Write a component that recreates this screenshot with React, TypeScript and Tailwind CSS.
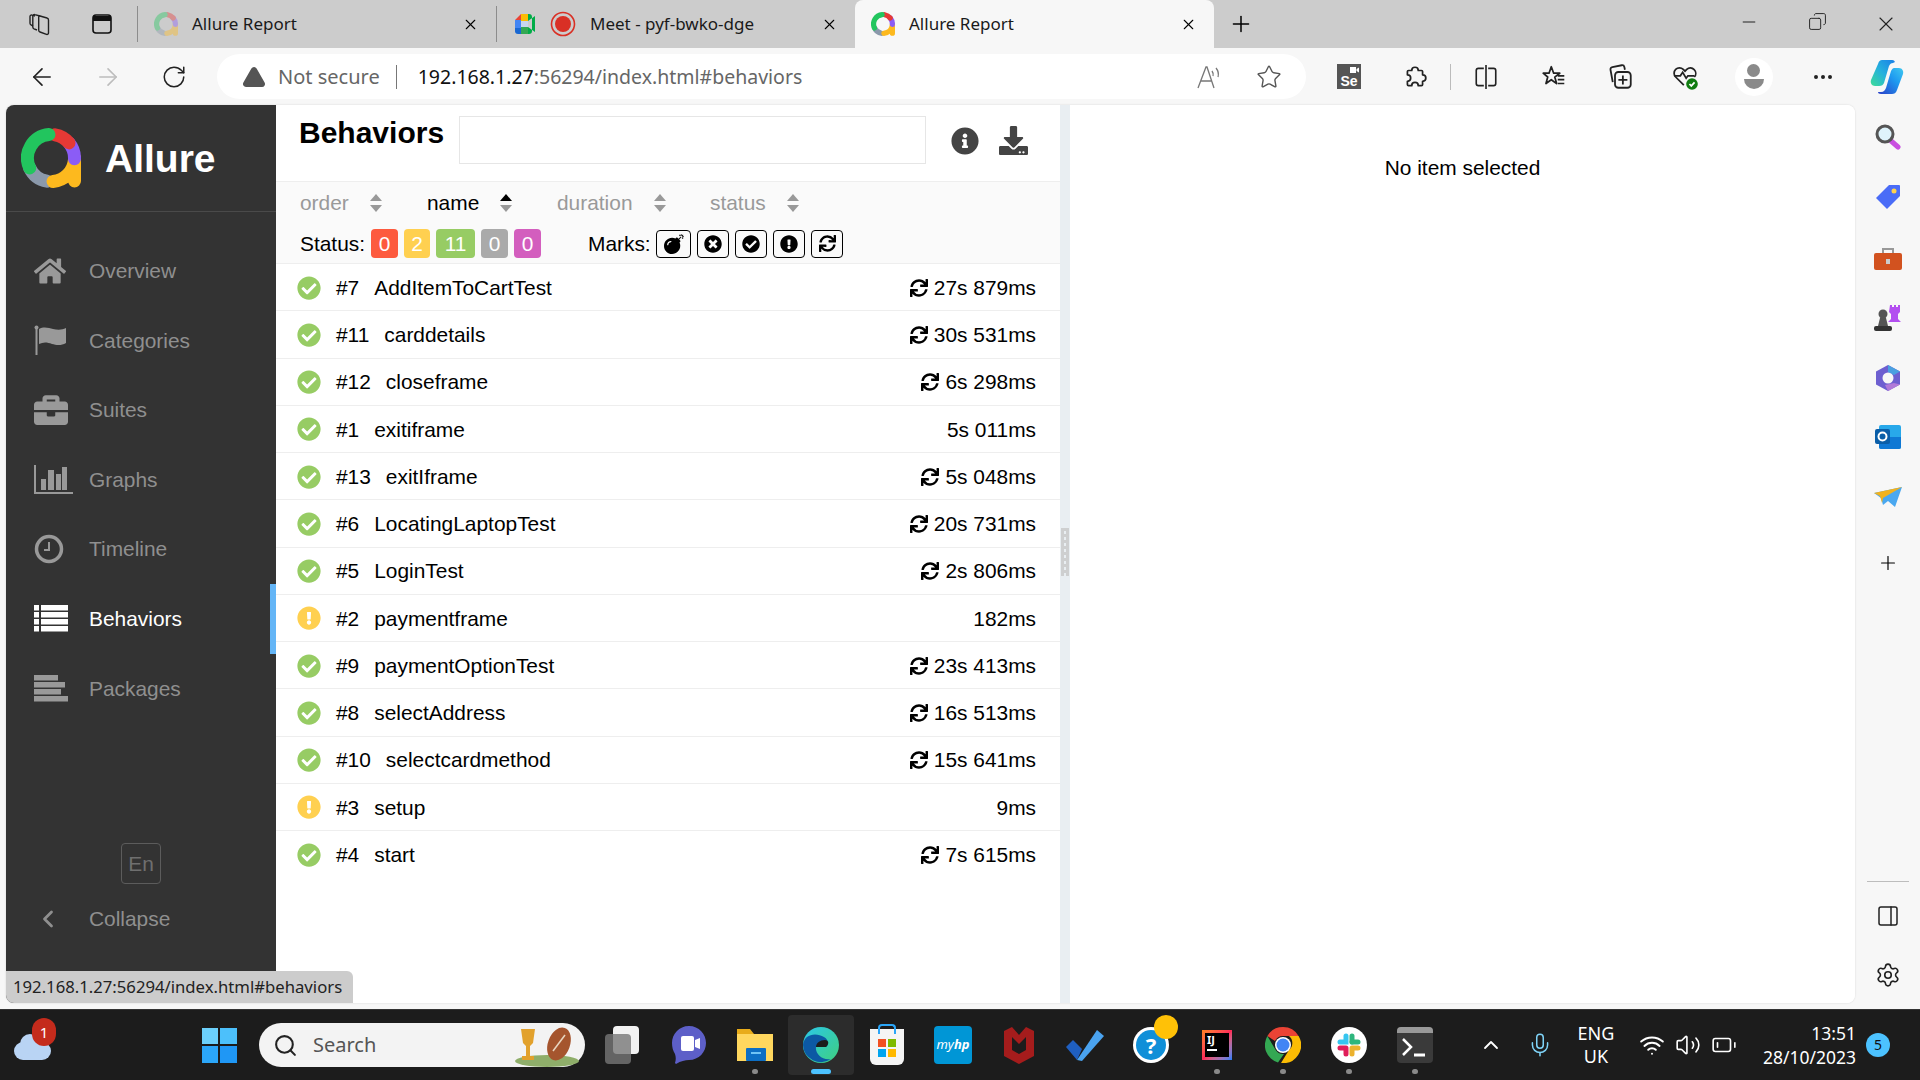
import React from 'react';
import {
  ArrowLeft, ArrowRight, RotateCw, Plus, X, Minus, Star, Copy, MoreHorizontal,
  Settings, PanelRight, ChevronUp, Mic, Wifi, Volume2, BatteryLow, Search, TriangleAlert, ChevronLeft,
} from 'lucide-react';
import {
  FaHome, FaBriefcase, FaCheckCircle, FaExclamationCircle, FaSync, FaInfoCircle, FaDownload, FaBomb, FaTimesCircle,
} from 'react-icons/fa';

const sans = "font-['Liberation_Sans',Arial,sans-serif]";
const ui = "font-['Noto_Sans',sans-serif]";

function polar(r: number, deg: number) {
  const a = ((deg - 90) * Math.PI) / 180;
  return `${(30 + r * Math.cos(a)).toFixed(2)} ${(30 + r * Math.sin(a)).toFixed(2)}`;
}
function arc(a0: number, a1: number, r = 23.5) {
  return `M${polar(r, a0)} A${r} ${r} 0 ${a1 - a0 > 180 ? 1 : 0} 1 ${polar(r, a1)}`;
}

function AllureLogo({ size, faded }: { size: number; faded?: boolean }) {
  const segs = [
    { d: arc(190, 245), c: '#8b99ab' },
    { d: `${arc(95, 175)} M53.5 30 V53`, c: '#fdb91e' },
    { d: arc(50, 92), c: '#8b5cf6' },
    { d: arc(10, 50), c: '#e53935' },
    { d: arc(245, 355), c: '#22c55e' },
  ];
  return (
    <svg width={size} height={size} viewBox="0 0 60 60" fill="none" className={faded ? 'opacity-40' : ''}>
      {segs.map((s, i) => (
        <path key={i} d={s.d} stroke={s.c} strokeWidth="13" strokeLinecap="round" />
      ))}
    </svg>
  );
}

function Tab({ children, title, active }: { children: React.ReactNode; title: string; active?: boolean }) {
  return (
    <div className={`w-[359px] flex items-center pl-4 pr-[17px] relative ${active ? 'h-12 bg-[#f7f7f7] rounded-t-lg' : 'border-l border-[#8c8c8c] h-[36px]'}`}>
      {children}
      <span className={`ml-[14px] text-[17px] text-[#1a1a1a] flex-1 ${ui}`}>{title}</span>
      <X size={17} strokeWidth={1.5} className="text-black" />
    </div>
  );
}

function TabBar() {
  return (
    <div className="h-12 bg-[#cccccc] flex items-center">
      <div className="w-[78px] flex justify-center ml-0">
        <svg width="26" height="26" viewBox="0 0 26 26" fill="none" stroke="#222" strokeWidth="1.4">
          <path d="M14 5l7 2a2 2 0 0 1 1.500 2V22a1.500 1.500 0 0 1-2 1.400l-6.500-2.400a2 2 0 0 1-1.300-1.800V6.500A1.200 1.200 0 0 1 14 5z" />
          <path d="M11 19l-3-1.200a2 2 0 0 1-1.200-1.800V5a1.500 1.500 0 0 1 2-1.400L14 5" />
          <path d="M7 15l-2-1a2 2 0 0 1-1-1.700V5.500a1.500 1.500 0 0 1 2-1.400L9 5" />
        </svg>
      </div>
      <div className="w-[48px] flex justify-center">
        <svg width="24" height="24" viewBox="0 0 24 24" fill="none" stroke="#111" strokeWidth="1.6">
          <rect x="3" y="3" width="18" height="18" rx="3" />
          <path d="M3 6.500h18" strokeWidth="5" />
        </svg>
      </div>
      <div className="w-[11px]" />
      <Tab title="Allure Report">
        <AllureLogo size={24} faded />
      </Tab>
      <Tab title="Meet - pyf-bwko-dge">
        <svg width="24" height="24" viewBox="0 0 24 24">
          <path d="M2 8l6-6h7v7H8v6H2z" fill="#ea4335" />
          <path d="M2 8h6v8H2z" fill="#4285f4" />
          <path d="M8 9h7v6H8z" fill="#c7d6ee" />
          <path d="M2 16h6v6H5a3 3 0 0 1-3-3z" fill="#1967d2" />
          <path d="M8 15h7v7H8z" fill="#34a853" />
          <path d="M15 2v7l7-5v16l-7-5v7h1a3 3 0 0 0 3-3V5a3 3 0 0 0-3-3z" fill="#00ac47" />
          <path d="M8 2h7v7H8z" fill="#fbbc04" />
        </svg>
        <svg width="26" height="26" viewBox="0 0 26 26" className="ml-[13px]">
          <circle cx="13" cy="13" r="11.500" fill="none" stroke="#d93025" strokeWidth="1.600" />
          <circle cx="13" cy="13" r="8" fill="#d93025" />
        </svg>
      </Tab>
      <Tab title="Allure Report" active>
        <AllureLogo size={24} />
      </Tab>
      <div className="flex-1 flex items-center pl-[14px]">
        <Plus size={26} strokeWidth={1.4} className="text-black" />
      </div>
      <div className="flex">
        <div className="w-[69px] flex justify-center"><Minus size={20} strokeWidth={1.2} className="text-[#222]" /></div>
        <div className="w-[69px] flex justify-center"><Copy size={19} strokeWidth={1.2} className="text-[#222] -scale-x-100" /></div>
        <div className="w-[68px] flex justify-center"><X size={24} strokeWidth={1.1} className="text-[#222]" /></div>
      </div>
    </div>
  );
}

function ToolSlot({ w, children }: { w: string; children: React.ReactNode }) {
  return <div className={`${w} flex justify-center items-center`}>{children}</div>;
}

function Toolbar() {
  return (
    <div className="h-[57px] bg-[#f7f7f7] flex items-center">
      <div className="w-[9px]" />
      <ToolSlot w="w-[66px]"><ArrowLeft size={28} strokeWidth={1.4} className="text-[#222]" /></ToolSlot>
      <ToolSlot w="w-[66px]"><ArrowRight size={28} strokeWidth={1.4} className="text-[#bdbdbd]" /></ToolSlot>
      <ToolSlot w="w-[66px]"><RotateCw size={26} strokeWidth={1.4} className="text-[#222]" /></ToolSlot>
      <div className="ml-[10px] w-[1089px] h-[45px] bg-white rounded-full flex items-center pl-[25px] pr-[6px]">
        <TriangleAlert size={24} strokeWidth={2} className="text-[#555] fill-[#555] stroke-[#555]" />
        <span className={`ml-[12px] text-[20px] text-[#666] ${ui}`}>Not secure</span>
        <div className="ml-4 w-px h-6 bg-[#777]" />
        <span className={`ml-[21px] text-[19.5px] text-[#111] flex-1 ${ui}`}>
          192.168.1.27<span className="text-[#666]">:56294/index.html#behaviors</span>
        </span>
        <svg width="28" height="28" viewBox="0 0 28 28" fill="none" stroke="#777" strokeWidth="1.300" className="mr-[32px]">
          <path d="M2 25L10 4h1l7 21M5 18h11" />
          <path d="M16 8a6 6 0 0 1 1 5M20 5a10 10 0 0 1 2 9" />
        </svg>
        <Star size={26} strokeWidth={1.3} className="text-[#555] mr-[18px]" />
      </div>
      <div className="w-[10px]" />
      <ToolSlot w="w-[66px]">
        <div className="relative w-[24px] h-[25px] bg-[#555] flex items-end justify-center">
          <svg width="9" height="6" viewBox="0 0 9 6" className="absolute right-[2px] top-[3px]">
            <path d="M0 0h6v6H0zM6.500 2L9 0.500v5L6.500 4z" fill="#fff" />
          </svg>
          <span className={`text-[14px] leading-[15px] font-bold text-white ${sans}`}>Se</span>
        </div>
      </ToolSlot>
      <ToolSlot w="w-[66px]">
        <svg width="26" height="26" viewBox="0 0 24 24" fill="none" stroke="#222" strokeWidth="1.600" strokeLinejoin="round">
          <path d="M9 6a3 3 0 1 1 6 0h3a1 1 0 0 1 1 1v3a3 3 0 1 1 0 6v3a1 1 0 0 1-1 1h-3a3 3 0 1 0-6 0H6a1 1 0 0 1-1-1v-3a3 3 0 1 0 0-6V7a1 1 0 0 1 1-1z" />
        </svg>
      </ToolSlot>
      <div className="w-px h-[26px] bg-[#bbb] ml-[2px]" />
      <ToolSlot w="w-[70px]">
        <svg width="26" height="26" viewBox="0 0 24 24" fill="none" stroke="#222" strokeWidth="1.500">
          <path d="M10 4H5a2 2 0 0 0-2 2v12a2 2 0 0 0 2 2h5M14 4h5a2 2 0 0 1 2 2v12a2 2 0 0 1-2 2h-5" />
          <path d="M12 1v22" />
        </svg>
      </ToolSlot>
      <ToolSlot w="w-[66px]">
        <svg width="26" height="26" viewBox="0 0 24 24" fill="none" stroke="#222" strokeWidth="1.600">
          <path d="M9.500 2.500l2.200 6h5.600l-4.600 3.600 1.700 6-4.900-3.600L4.600 18l1.600-6L2 8.500h5.400z" strokeLinejoin="round" />
          <path d="M15.500 11h6M15.500 14.500h6M15.500 18h6" />
        </svg>
      </ToolSlot>
      <ToolSlot w="w-[65px]">
        <svg width="27" height="27" viewBox="0 0 24 24" fill="none" stroke="#222" strokeWidth="1.600">
          <path d="M6 17l-2-11a2 2 0 0 1 1.600-2.400L14 2a2 2 0 0 1 2.300 1.500l.5 2.500" />
          <rect x="8" y="8" width="14" height="14" rx="3" />
          <path d="M15 11v8M11 15h8" />
        </svg>
      </ToolSlot>
      <ToolSlot w="w-[66px]">
        <svg width="28" height="28" viewBox="0 0 24 24" fill="none" stroke="#222" strokeWidth="1.500">
          <path d="M11 19L4 12a4.600 4.600 0 0 1 0-6.500 4.600 4.600 0 0 1 6.500 0L12 7l1.500-1.500a4.600 4.600 0 0 1 6.500 6.500" />
          <path d="M3 11h5l2-3 3 5 1.500-2H20" />
          <circle cx="18" cy="18" r="5" fill="#107c10" stroke="none" />
          <path d="M15.800 18l1.600 1.600 2.800-3" stroke="#fff" />
        </svg>
      </ToolSlot>
      <ToolSlot w="w-[71px]">
        <div className="w-[38px] h-[38px] rounded-full bg-white flex flex-col items-center justify-center">
          <div className="w-[13px] h-[13px] rounded-full bg-[#8a8a8a]" />
          <div className="w-[20px] h-[10px] rounded-b-full rounded-t-md bg-[#8a8a8a] mt-[2px]" />
        </div>
      </ToolSlot>
      <ToolSlot w="w-[68px]"><MoreHorizontal size={24} strokeWidth={2} className="text-[#222]" /></ToolSlot>
      <ToolSlot w="w-[60px]">
        <svg width="36" height="36" viewBox="0 0 36 36">
          <defs>
            <linearGradient id="cpa" x1="0" y1="1" x2="1" y2="0">
              <stop offset="0" stopColor="#3ddc97" />
              <stop offset="0.5" stopColor="#25b0dd" />
              <stop offset="1" stopColor="#1a7fe8" />
            </linearGradient>
            <linearGradient id="cpb" x1="0" y1="1" x2="1" y2="0">
              <stop offset="0" stopColor="#2b3fc8" />
              <stop offset="0.6" stopColor="#1e9af0" />
              <stop offset="1" stopColor="#3fc8f0" />
            </linearGradient>
          </defs>
          <path d="M13 1h10a3 3 0 0 1 3 2l-2 1c-2 0-3 1-4 3l-5 17c-1 2-2 3-5 3H6c-3 0-5-3-4-6L9 5c1-3 2-4 4-4z" fill="url(#cpa)" />
          <path d="M25 9h5c3 0 5 3 4 6l-6 16c-1 3-3 4-5 4H12c-2 0-3-1-3-2h3c3 0 4-2 5-4l5-17c1-2 2-3 3-3z" fill="url(#cpb)" />
        </svg>
      </ToolSlot>
    </div>
  );
}

function IconFlag() {
  return (
    <svg width="34" height="30" viewBox="0 0 34 30" fill="currentColor">
      <circle cx="2.500" cy="2.500" r="2" />
      <rect x="1.500" y="2" width="2" height="28" />
      <path d="M5 4c5-3 10-1 14 0 5 1 9 1 13-1v15c-5 3-10 2-14 1-5-2-9-2-13 0z" />
    </svg>
  );
}

function IconGraph() {
  return (
    <svg width="39" height="29" viewBox="0 0 39 29" fill="currentColor">
      <rect x="0" y="0" width="2" height="29" />
      <rect x="0" y="27" width="39" height="2" />
      <rect x="7" y="14" width="5" height="11" />
      <rect x="14" y="5" width="6" height="20" />
      <rect x="22" y="9" width="5" height="16" />
      <rect x="28" y="2" width="5" height="23" />
    </svg>
  );
}

function IconClock() {
  return (
    <svg width="30" height="30" viewBox="0 0 30 30" fill="none" stroke="currentColor">
      <circle cx="15" cy="15" r="12.500" strokeWidth="3.500" />
      <path d="M15 8v8H10" strokeWidth="2" />
    </svg>
  );
}

function IconThList() {
  return (
    <svg width="34" height="27" viewBox="0 0 34 27" fill="currentColor">
      {[0, 7, 14, 21].map((y) => (
        <g key={y}>
          <rect x="0" y={y} width="5" height="5.500" />
          <rect x="7" y={y} width="27" height="5.500" />
        </g>
      ))}
    </svg>
  );
}

function IconPackages() {
  return (
    <svg width="34" height="27" viewBox="0 0 34 27" fill="currentColor">
      <rect x="0" y="0" width="24" height="5.500" />
      <rect x="0" y="7" width="31" height="5.500" />
      <rect x="0" y="14" width="27" height="5.500" />
      <rect x="0" y="21" width="34" height="5.500" />
    </svg>
  );
}

const navItems = [
  { label: 'Overview', icon: <FaHome size={32} /> },
  { label: 'Categories', icon: <IconFlag /> },
  { label: 'Suites', icon: <FaBriefcase size={34} /> },
  { label: 'Graphs', icon: <IconGraph /> },
  { label: 'Timeline', icon: <IconClock /> },
  { label: 'Behaviors', icon: <IconThList />, active: true },
  { label: 'Packages', icon: <IconPackages /> },
];

function Sidebar() {
  return (
    <div className={`w-[270px] shrink-0 bg-[#333333] flex flex-col text-[20.9px] ${sans}`}>
      <div className="h-[107px] border-b border-[#4a4a4a] flex items-center pl-[15px]">
        <AllureLogo size={60} />
        <span className="ml-[24px] text-[39px] font-bold text-white leading-none">Allure</span>
      </div>
      <div className="pt-[24px]">
        {navItems.map((n) => (
          <div key={n.label} className={`h-[69.6px] flex items-center relative ${n.active ? 'text-white' : 'text-[#8f8f8f]'}`}>
            <div className={`w-[83px] pl-[28px] flex items-center ${n.active ? '' : 'text-[#999999]'}`}>{n.icon}</div>
            <span>{n.label}</span>
            {n.active && <div className="absolute right-0 top-0 bottom-0 w-[6px] bg-[#64b5f6]" />}
          </div>
        ))}
      </div>
      <div className="mt-auto pb-[49px]">
        <div className="flex justify-center">
          <div className="w-[40px] h-[41px] rounded border border-[#5c5c5c] flex items-center justify-center text-[#6f6f6f]">En</div>
        </div>
        <div className="h-[70px] flex items-center text-[#8f8f8f]">
          <div className="w-[83px] pl-[28px]"><ChevronLeft size={28} strokeWidth={2.4} /></div>
          <span>Collapse</span>
        </div>
      </div>
    </div>
  );
}

function SortIcon({ active }: { active?: boolean }) {
  return (
    <svg width="14" height="20" viewBox="0 0 14 20">
      <path d="M7 1l6 7H1z" fill={active ? '#000' : '#999'} />
      <path d="M7 19l6-7H1z" fill="#999" />
    </svg>
  );
}

const sorts = [
  { label: 'order', w: 'w-[127px]' },
  { label: 'name', w: 'w-[130px]', active: true },
  { label: 'duration', w: 'w-[153px]' },
  { label: 'status', w: 'w-[100px]' },
];

const statusBadges = [
  { v: '0', c: 'bg-[#fd5a3e] w-[27px]' },
  { v: '2', c: 'bg-[#ffd050] w-[26px]' },
  { v: '11', c: 'bg-[#97cc64] w-[39px]' },
  { v: '0', c: 'bg-[#aaaaaa] w-[27px]' },
  { v: '0', c: 'bg-[#d35ebe] w-[27px]' },
];

const rows = [
  { id: '#7', name: 'AddItemToCartTest', time: '27s 879ms', retry: true },
  { id: '#11', name: 'carddetails', time: '30s 531ms', retry: true },
  { id: '#12', name: 'closeframe', time: '6s 298ms', retry: true },
  { id: '#1', name: 'exitiframe', time: '5s 011ms' },
  { id: '#13', name: 'exitIframe', time: '5s 048ms', retry: true },
  { id: '#6', name: 'LocatingLaptopTest', time: '20s 731ms', retry: true },
  { id: '#5', name: 'LoginTest', time: '2s 806ms', retry: true },
  { id: '#2', name: 'paymentframe', time: '182ms', warn: true },
  { id: '#9', name: 'paymentOptionTest', time: '23s 413ms', retry: true },
  { id: '#8', name: 'selectAddress', time: '16s 513ms', retry: true },
  { id: '#10', name: 'selectcardmethod', time: '15s 641ms', retry: true },
  { id: '#3', name: 'setup', time: '9ms', warn: true },
  { id: '#4', name: 'start', time: '7s 615ms', retry: true },
];

function MarkBox({ w, children }: { w: string; children: React.ReactNode }) {
  return <div className={`${w} h-[28px] border border-black rounded-[4px] flex items-center justify-center`}>{children}</div>;
}

function ListPane() {
  return (
    <div className={`w-[784px] shrink-0 flex flex-col bg-white text-black text-[20.9px] ${sans}`}>
      <div className="h-[77px] border-b border-[#eeeeee] flex pl-[23px]">
        <h2 className="text-[30px] font-bold leading-none mt-[13px] w-[160px]">Behaviors</h2>
        <div className="w-[467px] h-[48px] mt-[11px] border border-[#e6e6e6]" />
        <FaInfoCircle size={28} className="text-[#444] ml-[25px] mt-[22px]" />
        <FaDownload size={29} className="text-[#444] ml-[20px] mt-[21px]" />
      </div>
      <div className="h-[82px] bg-[#fafafa] border-b border-[#eeeeee] pl-[24px]">
        <div className="flex h-[42px] items-center">
          {sorts.map((s) => (
            <div key={s.label} className={`${s.w} flex items-center gap-[20px] ${s.active ? 'text-black' : 'text-[#999999]'}`}>
              <span>{s.label}</span>
              <SortIcon active={s.active} />
            </div>
          ))}
        </div>
        <div className="flex items-center h-[39px]">
          <span className="w-[71px]">Status:</span>
          <div className="flex gap-[6px] w-[217px]">
            {statusBadges.map((b, i) => (
              <div key={i} className={`${b.c} h-[29px] rounded-[4px] text-white text-center leading-[29px]`}>{b.v}</div>
            ))}
          </div>
          <span className="w-[68px]">Marks:</span>
          <div className="flex gap-[6px] items-center">
            <MarkBox w="w-[35px]"><FaBomb size={20} /></MarkBox>
            <MarkBox w="w-[32px]"><FaTimesCircle size={18} /></MarkBox>
            <MarkBox w="w-[32px]"><FaCheckCircle size={18} /></MarkBox>
            <MarkBox w="w-[32px]"><FaExclamationCircle size={18} /></MarkBox>
            <MarkBox w="w-[32px]"><FaSync size={17} /></MarkBox>
          </div>
        </div>
      </div>
      {rows.map((r, i) => (
        <div key={r.id} className={`h-[47.25px] pt-px flex items-center pl-[21px] pr-[24px] ${i < rows.length - 1 ? 'border-b border-[#eeeeee]' : ''}`}>
          {r.warn
            ? <FaExclamationCircle size={24} className="text-[#ffd050]" />
            : <FaCheckCircle size={24} className="text-[#97cc64]" />}
          <span className="ml-[15px]">{r.id}</span>
          <span className="ml-[15px] flex-1">{r.name}</span>
          {r.retry && <FaSync size={18} className="mr-[6px]" />}
          <span>{r.time}</span>
        </div>
      ))}
    </div>
  );
}

function Browser() {
  return (
    <div className="h-[904px] bg-[#f7f7f7] flex">
      <div className="ml-[6px] w-[1849px] h-[898px] rounded-lg overflow-hidden flex relative bg-white shadow-[0_0_2px_rgba(0,0,0,0.15)]">
        <Sidebar />
        <ListPane />
        <div className="w-[10px] bg-[#e9eef2] flex items-center justify-center">
          <div className="w-[8px] h-[48px] -mt-[5px] [background-image:linear-gradient(#c8c8c8_3px,transparent_3px),linear-gradient(90deg,#c8c8c8_3px,transparent_3px)] bg-[length:5px_6px] [background-blend-mode:normal] opacity-80" />
        </div>
        <div className={`flex-1 bg-white text-center text-[20.9px] text-black pt-[47px] ${sans}`}>No item selected</div>
        <div className={`absolute left-0 bottom-[-1px] h-[33px] w-[347px] pl-[7px] bg-[#cccccc] rounded-tr-md text-[16.7px] leading-[32px] text-[#222] ${ui}`}>
          192.168.1.27:56294/index.html#behaviors
        </div>
      </div>
      <div className="flex-1 flex flex-col items-center pt-[19px]">
        <svg width="26" height="26" viewBox="0 0 26 26" className="mb-[34px]">
          <path d="M15 16l8 7" stroke="#c94fe0" strokeWidth="5" strokeLinecap="round" />
          <circle cx="10" cy="10" r="8" fill="#dff3fb" stroke="#555" strokeWidth="3" />
        </svg>
        <svg width="26" height="26" viewBox="0 0 26 26" className="mb-[37px]">
          <path d="M14 1h10a1 1 0 0 1 1 1v10L12 25 1 14z" fill="#4a6cf7" />
          <circle cx="19" cy="7" r="2.500" fill="#ffd24d" />
        </svg>
        <svg width="28" height="24" viewBox="0 0 28 24" className="mb-[33px]">
          <path d="M9 6V2h10v4" fill="none" stroke="#999" strokeWidth="2" />
          <rect x="0" y="6" width="28" height="17" rx="2" fill="#d2521f" />
          <rect x="12" y="12" width="4" height="5" fill="#ccc" />
        </svg>
        <svg width="28" height="28" viewBox="0 0 28 28" className="mb-[32px]">
          <path d="M17 1h2v2h2V1h2v2h2V1h2v7l-2 2v5l3 3H15l3-3v-5l-2-2z" fill="#b34ff0" transform="translate(-1 0)" />
          <circle cx="9" cy="10" r="4.500" fill="#555" />
          <path d="M6 14h6l2 8H4z" fill="#555" />
          <rect x="0" y="22" width="18" height="5" rx="2" fill="#333" />
        </svg>
        <svg width="26" height="28" viewBox="0 0 26 28" className="mb-[33px]">
          <path d="M13 1l12 6.500v13L13 27 1 20.500v-13z" fill="#6d5fd0" />
          <path d="M13 1l12 6.500-6 3.500-6-3z" fill="#4aa0e0" />
          <path d="M25 20.500L13 27l-3-6 9-2z" fill="#b07ad8" />
          <circle cx="13" cy="14" r="5.500" fill="#f7f7f7" />
        </svg>
        <svg width="26" height="24" viewBox="0 0 26 24" className="mb-[38px]">
          <rect x="4" y="0" width="22" height="24" rx="2" fill="#28a8ea" />
          <path d="M4 12h22v10a2 2 0 0 1-2 2H6a2 2 0 0 1-2-2z" fill="#0f78d4" />
          <rect x="0" y="4" width="15" height="15" rx="2" fill="#0a5ea8" />
          <circle cx="7.500" cy="11.500" r="4" fill="none" stroke="#fff" strokeWidth="2" />
        </svg>
        <svg width="28" height="20" viewBox="0 0 28 20" className="mb-[45px]">
          <path d="M0 6l28-6-7 20-7-6-5 4-2-7z" fill="#4aa8f0" />
          <path d="M0 6l28-6-19 11-1 5-2-7z" fill="#f2b21d" />
        </svg>
        <Plus size={22} strokeWidth={1.3} className="text-black" />
        <div className="mt-auto w-[42px] border-t border-[#bdbdbd] mb-[22px]" />
        <PanelRight size={24} strokeWidth={1.5} className="text-[#222] mb-[34px]" />
        <Settings size={26} strokeWidth={1.5} className="text-[#222] mb-[21px]" />
      </div>
    </div>
  );
}

function TaskSlot({ children, dot, active }: { children: React.ReactNode; dot?: boolean; active?: boolean }) {
  return (
    <div className={`w-[66px] h-[60px] flex items-center justify-center relative rounded ${active ? 'bg-[#2c2c2c]' : ''}`}>
      {children}
      {dot && <div className="absolute bottom-[1px] w-[6px] h-[5px] rounded-full bg-[#8a8a8a]" />}
      {active && <div className="absolute bottom-[1px] w-[20px] h-[5px] rounded-full bg-[#4cc2ff]" />}
    </div>
  );
}

function Taskbar() {
  return (
    <div className={`h-[71px] bg-[#1c1c1c] border-t border-[#333] flex items-center text-white ${ui}`}>
      <div className="w-[186px] pl-[14px]">
        <div className="relative w-[38px] h-[30px]">
          <div className="absolute left-0 bottom-0 w-[37px] h-[18px] rounded-full bg-[#b9d4f4]" />
          <div className="absolute left-[6px] bottom-[6px] w-[20px] h-[20px] rounded-full bg-[#b9d4f4]" />
          <div className="absolute left-[18px] -top-[12px] w-[24px] h-[28px] rounded-full bg-[#c42b1c] text-[15px] leading-[28px] text-center">1</div>
        </div>
      </div>
      <div className="w-[66px] flex justify-center">
        <div className="grid grid-cols-2 gap-[2px] w-[35px] h-[35px]">
          <div className="bg-[#6cd0fb]" />
          <div className="bg-[#4cc0fb]" />
          <div className="bg-[#2ba6f8]" />
          <div className="bg-[#1f97f5]" />
        </div>
      </div>
      <div className="ml-[7px] w-[326px] h-[44px] rounded-full bg-[#f3f3f3] flex items-center pl-[14px] pr-1 relative">
        <Search size={25} strokeWidth={2} className="text-[#222]" />
        <span className="ml-[15px] text-[20px] text-[#555]">Search</span>
        <svg width="70" height="44" viewBox="0 0 70 44" className="ml-auto">
          <ellipse cx="36" cy="38" rx="32" ry="6" fill="#8fae6a" />
          <path d="M10 6h14l-2 14-3 3v10h4v4H11v-4h4V23l-3-3z" fill="#e2a12c" />
          <ellipse cx="48" cy="21" rx="11" ry="17" transform="rotate(20 48 21)" fill="#a5552e" />
          <path d="M42 28l12-16" stroke="#e8d5c0" strokeWidth="1.500" />
        </svg>
      </div>
      <div className="w-[5px]" />
      <TaskSlot>
        <div className="relative w-[36px] h-[38px]">
          <div className="absolute right-[2px] top-0 w-[26px] h-[28px] rounded-sm bg-[#f2f2f2]" />
          <div className="absolute left-0 bottom-0 w-[26px] h-[30px] rounded-sm bg-[#777]/80" />
        </div>
      </TaskSlot>
      <TaskSlot>
        <svg width="36" height="40" viewBox="0 0 36 40">
          <path d="M18 1c10 0 17 8 17 17s-7 17-17 17c-4 0-8 1-13 4l-1-1c1-3 1-6 0-9C2 26 1 22 1 18 1 9 8 1 18 1z" fill="#5d5fc8" />
          <rect x="10" y="11" width="13" height="15" rx="2" fill="#fff" />
          <path d="M24 15l5-2v11l-5-2z" fill="#fff" />
        </svg>
      </TaskSlot>
      <TaskSlot dot>
        <svg width="38" height="36" viewBox="0 0 38 36">
          <path d="M1 2h13l4 5h19v26H1z" fill="#e8ac1a" />
          <rect x="1" y="7" width="36" height="27" fill="#ffd75e" />
          <rect x="10" y="21" width="20" height="13" rx="1" fill="#0c6ec4" />
          <rect x="15" y="25" width="10" height="2" fill="#6fc3f5" />
        </svg>
      </TaskSlot>
      <TaskSlot active>
        <svg width="38" height="38" viewBox="0 0 38 38">
          <defs>
            <linearGradient id="edge" x1="0" y1="0" x2="1" y2="1">
              <stop offset="0" stopColor="#2bc7e8" />
              <stop offset="1" stopColor="#3fd07e" />
            </linearGradient>
          </defs>
          <circle cx="19" cy="19" r="18" fill="url(#edge)" />
          <path d="M1 19C2 8 14 6 22 11c5 3 5 8 2 10H14c-1 6 6 14 15 12a18 18 0 0 1-28-14z" fill="#0c59a4" />
          <path d="M14 21c0-4 4-7 9-7 3 0 5 3 1 7z" fill="#1c1c1c" />
        </svg>
      </TaskSlot>
      <TaskSlot>
        <div className="relative w-[34px] h-[36px] bg-[#f5f5f5] rounded-b-md mt-1 grid grid-cols-2 gap-[2px] p-[8px] pt-[10px]">
          <div className="absolute left-[8px] -top-[5px] w-[18px] h-[10px] border-2 border-b-0 border-[#2ba6f8] rounded-t" />
          <div className="bg-[#f25022]" />
          <div className="bg-[#7fba00]" />
          <div className="bg-[#00a4ef]" />
          <div className="bg-[#ffb900]" />
        </div>
      </TaskSlot>
      <TaskSlot>
        <div className="w-[38px] h-[38px] rounded-sm bg-[#0096d6] flex items-center justify-center">
          <span className="text-[13px] italic text-white">my<b>hp</b></span>
        </div>
      </TaskSlot>
      <TaskSlot>
        <svg width="32" height="38" viewBox="0 0 32 38">
          <path d="M16 38L1 30V5l8-4 7 8 7-8 8 4v25z" fill="#a51c1c" />
          <path d="M16 28l-7-4V11l7 7 7-7v13z" fill="#1c1c1c" />
        </svg>
      </TaskSlot>
      <TaskSlot>
        <svg width="38" height="32" viewBox="0 0 38 32">
          <path d="M0 18l7-7 9 9-5 11z" fill="#1f5fc0" />
          <path d="M11 31L31 1l7 6-22 25z" fill="#4aa3f0" />
        </svg>
      </TaskSlot>
      <TaskSlot>
        <div className="relative w-[36px] h-[36px] rounded-full bg-white flex items-center justify-center">
          <div className="w-[30px] h-[30px] rounded-full bg-[#0f8fd8] text-center text-[22px] leading-[30px] font-bold text-white">?</div>
          <div className="absolute -right-[9px] -top-[12px] w-[24px] h-[24px] rounded-full bg-[#ffc107]" />
        </div>
      </TaskSlot>
      <TaskSlot dot>
        <div className="w-[30px] h-[30px] bg-gradient-to-br from-[#fc801d] via-[#fe2857] to-[#087cfa] p-[3px]">
          <div className="w-full h-full bg-black pl-[2px] text-[11px] leading-[13px] font-bold text-white">IJ<div className="w-[10px] h-[2px] bg-white mt-[3px]" /></div>
        </div>
      </TaskSlot>
      <TaskSlot dot>
        <svg width="36" height="36" viewBox="0 0 36 36">
          <path d="M18 0a18 18 0 0 1 15.600 9H18a9 9 0 0 0-8 5L2.400 9A18 18 0 0 1 18 0z" fill="#ea4335" />
          <path d="M2.400 9l8 13.500A9 9 0 0 0 19 27l-6 8.500A18 18 0 0 1 2.400 9z" fill="#34a853" />
          <path d="M33.600 9A18 18 0 0 1 16 36l8-13a9 9 0 0 0 0-14z" fill="#fbbc04" />
          <circle cx="18" cy="18" r="8" fill="#fff" />
          <circle cx="18" cy="18" r="6.500" fill="#4285f4" />
        </svg>
      </TaskSlot>
      <TaskSlot dot>
        <svg width="36" height="36" viewBox="0 0 36 36">
          <circle cx="18" cy="18" r="18" fill="#fff" />
          <path d="M15 9v6H9" stroke="#36c5f0" strokeWidth="5" strokeLinecap="round" fill="none" />
          <path d="M21 15V9M21 15v-2" stroke="#2eb67d" strokeWidth="5" strokeLinecap="round" fill="none" />
          <path d="M27 15h-6" stroke="#2eb67d" strokeWidth="5" strokeLinecap="round" fill="none" />
          <path d="M21 21h6M21 21v6" stroke="#ecb22e" strokeWidth="5" strokeLinecap="round" fill="none" />
          <path d="M15 21H9M15 21v6" stroke="#e01e5a" strokeWidth="5" strokeLinecap="round" fill="none" />
        </svg>
      </TaskSlot>
      <TaskSlot dot>
        <div className="w-[36px] h-[36px] rounded-sm bg-[#3a3a3a] relative">
          <div className="h-[6px] bg-[#999] rounded-t-sm" />
          <svg width="36" height="30" viewBox="0 0 36 30" className="absolute left-0 top-[6px]">
            <path d="M6 6l8 8-8 8" stroke="#fff" strokeWidth="2.500" fill="none" />
            <path d="M17 22h11" stroke="#fff" strokeWidth="3" />
          </svg>
        </div>
      </TaskSlot>
      <div className="w-[43px] flex justify-center ml-[21px]"><ChevronUp size={24} strokeWidth={1.8} /></div>
      <div className="w-[48px] flex justify-center ml-[4px]"><Mic size={26} strokeWidth={1.4} className="text-[#7fd3f7]" /></div>
      <div className="w-[70px] text-center text-[18px] leading-[23px] -ml-[3px]">ENG<br />UK</div>
      <div className="flex items-center gap-[10px] ml-[8px]">
        <Wifi size={26} strokeWidth={1.8} />
        <Volume2 size={26} strokeWidth={1.5} />
        <BatteryLow size={26} strokeWidth={1.5} />
      </div>
      <div className="ml-auto text-right text-[17.5px] leading-[24px] mr-[10px]">13:51<br />28/10/2023</div>
      <div className="w-[24px] h-[24px] rounded-full bg-[#4cc2ff] text-[#111] text-center text-[14px] leading-[24px] mr-[30px]">5</div>
    </div>
  );
}

export default function App() {
  return (
    <div className="w-[1920px] h-[1080px] overflow-hidden flex flex-col">
      <TabBar />
      <Toolbar />
      <Browser />
      <Taskbar />
    </div>
  );
}
